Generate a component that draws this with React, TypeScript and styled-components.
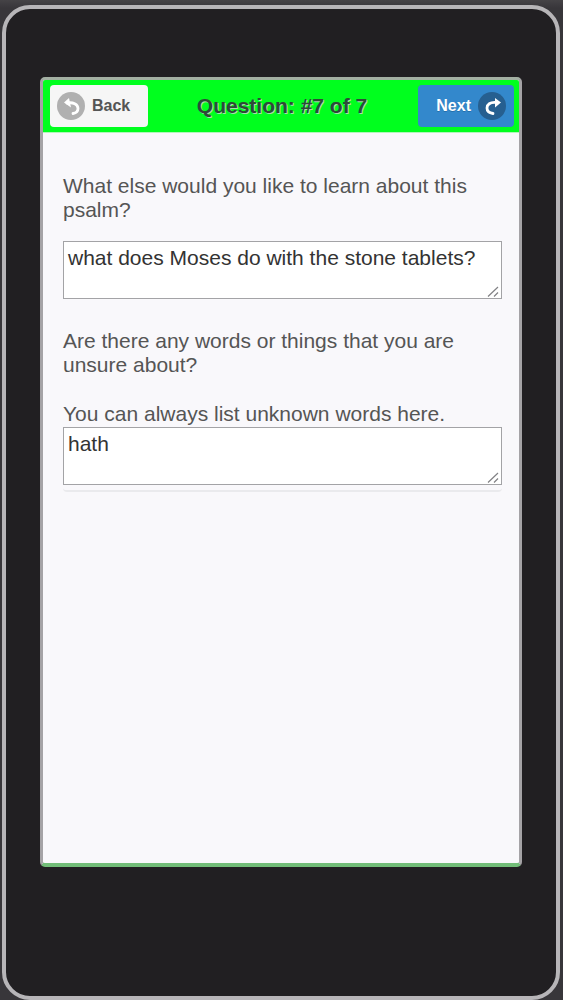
import React, { useState } from "react";
import styled, { createGlobalStyle } from "styled-components";

const GlobalStyle = createGlobalStyle`
  * { box-sizing: border-box; }
  body {
    margin: 0;
    background: #403e41;
    font-family: "Liberation Sans", Arial, sans-serif;
    color: #555;
  }
`;

const Backdrop = styled.div`
  display: flex;
  min-height: 100vh;
  padding: 5px 3px 0 2px;
  background: linear-gradient(#454346, #38363a 8px, #38363a);
`;

const Device = styled.div`
  flex: 1;
  display: flex;
  min-width: 0;
  padding: 68px 34px 129px;
  border: 4px solid #b7b5b8;
  border-radius: 28px;
  background: #211f22;
`;

const Screen = styled.main`
  flex: 1;
  display: flex;
  flex-direction: column;
  min-width: 0;
  overflow: hidden;
  border: 3px solid #a5a3a6;
  border-top-color: #a3b0a3;
  border-bottom: 4px solid #72bd78;
  border-radius: 5px;
  background: #f9f8fb;
`;

const Header = styled.header`
  display: grid;
  grid-template-columns: 1fr auto 1fr;
  align-items: center;
  height: 53px;
  padding: 0 5px 0 7px;
  background: #00ff1e;
  border-bottom: 1px solid #b4f5bb;
`;

const Title = styled.h1`
  margin: 0;
  font-size: 21px;
  line-height: 24px;
  color: #2f4a36;
  text-shadow: 1px 1px 0 #a9dcae;
`;

const NavButton = styled.button<{ $primary?: boolean }>`
  display: flex;
  align-items: center;
  justify-self: ${(p) => (p.$primary ? "end" : "start")};
  gap: 7px;
  height: 42px;
  padding: ${(p) => (p.$primary ? "0 8px 0 18px" : "0 18px 0 7px")};
  border: 0;
  border-radius: 4px;
  background: ${(p) => (p.$primary ? "#3388cc" : "#f6f6f6")};
  color: ${(p) => (p.$primary ? "#fff" : "#555")};
  font: bold 16px "Liberation Sans", Arial, sans-serif;
  text-shadow: 0 1px 0 ${(p) => (p.$primary ? "#2470ad" : "#f3f3f3")};
`;

const Icon = styled.svg`
  display: block;
  flex: none;
  width: 28px;
  height: 28px;
`;

const Form = styled.form`
  padding: 41px 17px 0 20px;
`;

const Prompt = styled.label`
  display: block;
  font-size: 21px;
  line-height: 24px;
`;

const Field = styled.div`
  position: relative;
`;

const Answer = styled.textarea`
  display: block;
  width: 100%;
  height: 58px;
  padding: 4px;
  border: 1px solid #a3a3a6;
  border-radius: 0;
  background: #fff;
  color: #333;
  font: 21px/24px "Liberation Sans", Arial, sans-serif;
  overflow: hidden;
  resize: none;
`;

const Grip = styled.svg`
  position: absolute;
  right: 3px;
  bottom: 2px;
  width: 12px;
  height: 11px;
  pointer-events: none;
`;

const FirstQuestion = styled.section`
  display: grid;
  gap: 19px;
`;

const WordsQuestion = styled.section`
  padding: 30px 0 5px;
  border-bottom: 2px solid #eaeaed;
  border-radius: 0 0 4px 4px;
`;

const Hint = styled.p`
  margin: 25px 0 1px;
  font-size: 21px;
  line-height: 24px;
`;

function BackIcon() {
  return (
    <Icon viewBox="0 0 28 28" aria-hidden="true">
      <circle cx="14" cy="14" r="14" fill="#b0b0b0" />
      <path
        d="M10 11C16 10 21 12 21 16.500C21 19.500 19 21 16 21.500"
        fill="none"
        stroke="#fff"
        strokeWidth="2.800"
        strokeLinecap="round"
      />
      <path d="M12 6L7 10.500L14 15.500Z" fill="#fff" />
    </Icon>
  );
}

function NextIcon() {
  return (
    <Icon viewBox="0 0 28 28" aria-hidden="true">
      <circle cx="14" cy="14" r="14" fill="#265f90" />
      <path
        d="M18 10.500C12 10 9 12.500 9 16C9 19 11.500 21 15 21.500"
        fill="none"
        stroke="#fff"
        strokeWidth="2.800"
        strokeLinecap="round"
      />
      <path d="M17 6L23 10.500L17 15.500Z" fill="#fff" />
    </Icon>
  );
}

type AnswerFieldProps = {
  id: string;
  value: string;
  onChange: (value: string) => void;
  describedBy?: string;
};

function AnswerField({ id, value, onChange, describedBy }: AnswerFieldProps) {
  return (
    <Field>
      <Answer
        id={id}
        aria-describedby={describedBy}
        spellCheck={false}
        value={value}
        onChange={(e) => onChange(e.target.value)}
      />
      <Grip viewBox="0 0 12 11" aria-hidden="true">
        <path d="M1 10.500L11 1M7 10.500L11 6.500" fill="none" stroke="#828285" strokeWidth="1.200" />
      </Grip>
    </Field>
  );
}

export default function App() {
  const [learn, setLearn] = useState("what does Moses do with the stone tablets?");
  const [words, setWords] = useState("hath");

  return (
    <>
      <GlobalStyle />
      <Backdrop>
        <Device>
          <Screen>
            <Header>
              <NavButton type="button">
                <BackIcon />
                Back
              </NavButton>
              <Title>Question: #7 of 7</Title>
              <NavButton type="button" $primary>
                Next
                <NextIcon />
              </NavButton>
            </Header>
            <Form>
              <FirstQuestion>
                <Prompt htmlFor="learn">What else would you like to learn about this psalm?</Prompt>
                <AnswerField id="learn" value={learn} onChange={setLearn} />
              </FirstQuestion>
              <WordsQuestion>
                <Prompt htmlFor="words">Are there any words or things that you are unsure about?</Prompt>
                <Hint id="words-hint">You can always list unknown words here.</Hint>
                <AnswerField id="words" value={words} onChange={setWords} describedBy="words-hint" />
              </WordsQuestion>
            </Form>
          </Screen>
        </Device>
      </Backdrop>
    </>
  );
}
